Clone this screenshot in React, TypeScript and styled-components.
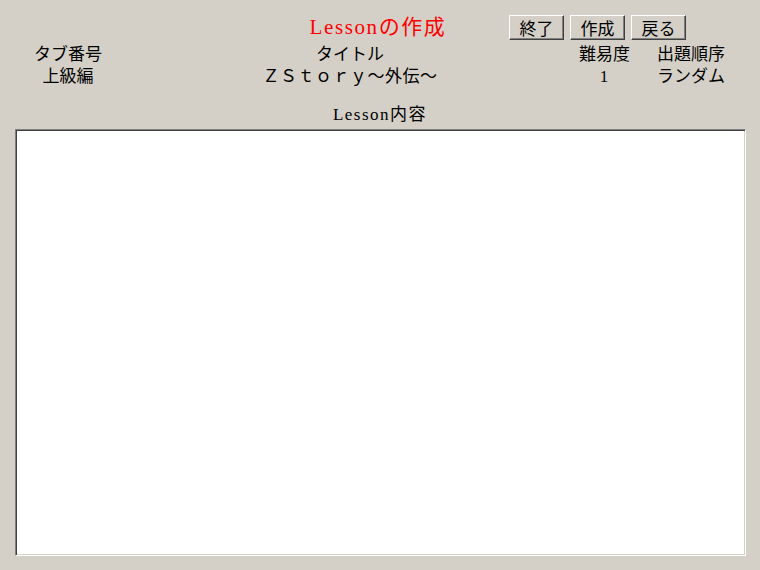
import React from "react";
import styled, { createGlobalStyle } from "styled-components";

const GlobalStyle = createGlobalStyle`
  html, body {
    margin: 0;
    padding: 0;
    background: #d4d0c8;
  }
  body {
    font-family: "Liberation Serif", "Noto Sans CJK JP", serif;
    color: #000;
  }
`;

const Page = styled.div`
  width: 760px;
  height: 570px;
  padding-top: 15px;
  box-sizing: border-box;
  background: #d4d0c8;
`;

const Header = styled.div`
  display: grid;
  grid-template-columns: 270px 200px auto;
  align-items: center;
  padding-left: 15px;
  height: 25px;
`;

const Title = styled.h1`
  grid-column: 2;
  margin: 0;
  font-size: 21px;
  font-weight: normal;
  letter-spacing: 1.6px;
  color: #ff0000;
  text-align: center;
  line-height: 25px;
  margin-top: 0;
  margin-left: -14px;
  white-space: nowrap;
`;

const Buttons = styled.div`
  grid-column: 3;
  display: flex;
  gap: 6px;
  margin-left: 24px;
`;

const Button = styled.button`
  height: 25px;
  width: 55px;
  padding: 0;
  font-family: "Noto Sans CJK JP", sans-serif;
  font-size: 17px;
  line-height: 21px;
  color: #000;
  background: #d4d0c8;
  border-style: solid;
  border-width: 1px;
  border-color: #ffffff #404040 #404040 #ffffff;
  box-shadow: inset -1px -1px 0 #808080;
  cursor: pointer;
`;

const InfoTable = styled.div`
  display: grid;
  grid-template-columns: 106px 458px 50px 124px;
  padding-left: 15px;
  margin-top: 4px;
  font-size: 17px;
  line-height: 22px;
`;

const Cell = styled.div<{ $spread?: boolean }>`
  text-align: center;
  white-space: nowrap;
  letter-spacing: ${(p) => (p.$spread ? "0.5px" : "0")};
`;

const ContentLabel = styled.div`
  margin-top: 16px;
  text-align: center;
  font-size: 17px;
  line-height: 22px;
  letter-spacing: 1.5px;
`;

const ContentArea = styled.textarea`
  display: block;
  margin: 3px 0 0 15px;
  width: 731px;
  height: 427px;
  box-sizing: border-box;
  resize: none;
  background: #ffffff;
  border-style: solid;
  border-width: 1px;
  border-color: #808080 #ffffff #ffffff #808080;
  box-shadow: inset 1px 1px 0 #404040, inset -1px -1px 0 #d4d0c8;
  outline: none;
  font-family: "Liberation Serif", "Noto Sans CJK JP", serif;
  font-size: 16px;
`;

export default function App() {
  return (
    <Page>
      <GlobalStyle />
      <Header>
        <Title>Lessonの作成</Title>
        <Buttons>
          <Button>終了</Button>
          <Button>作成</Button>
          <Button>戻る</Button>
        </Buttons>
      </Header>
      <InfoTable>
        <Cell>タブ番号</Cell>
        <Cell>タイトル</Cell>
        <Cell>難易度</Cell>
        <Cell>出題順序</Cell>
        <Cell>上級編</Cell>
        <Cell $spread>ＺＳｔｏｒｙ～外伝～</Cell>
        <Cell>1</Cell>
        <Cell>ランダム</Cell>
      </InfoTable>
      <ContentLabel>Lesson内容</ContentLabel>
      <ContentArea defaultValue="" />
    </Page>
  );
}
